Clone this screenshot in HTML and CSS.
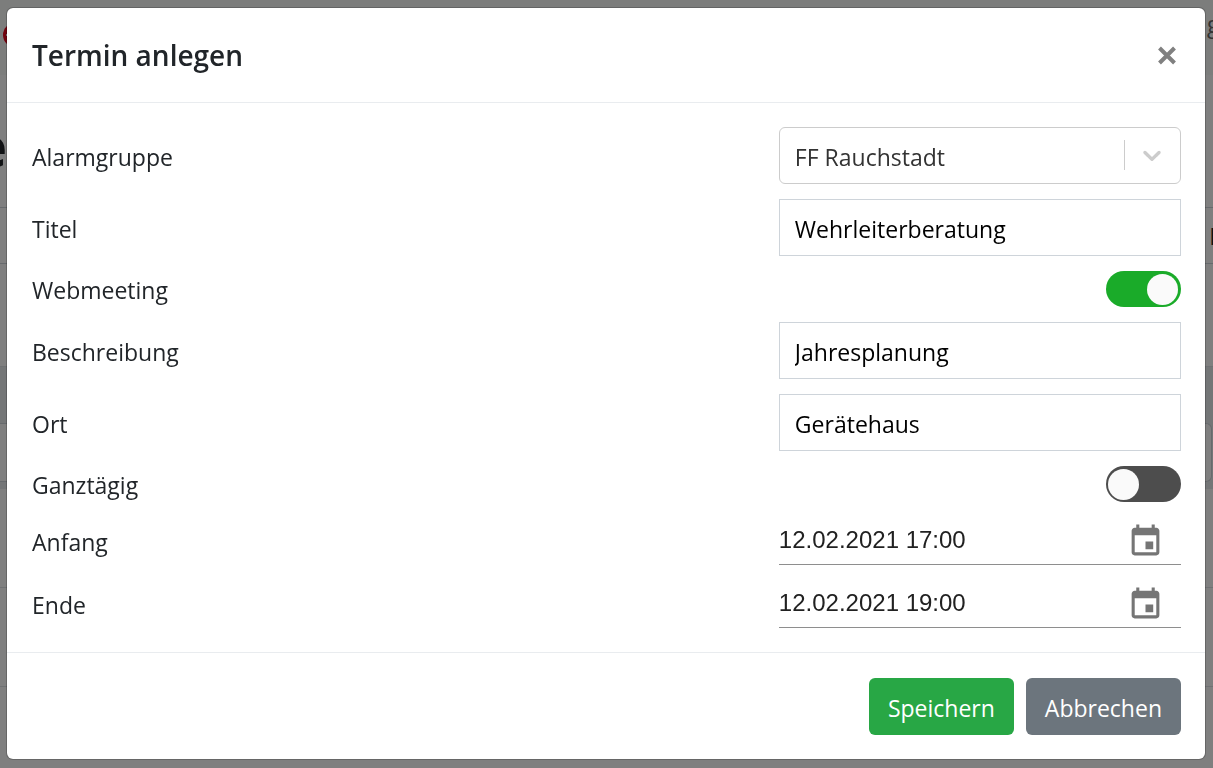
FILE: index.html
```html
<!DOCTYPE html>
<html lang="de">
  <head>
    <meta charset="UTF-8" />
    <meta name="viewport" content="width=device-width, initial-scale=1.0" />
    <title>Termin anlegen</title>
    <link rel="stylesheet" href="styles.css">
  </head>
  <body>
    <div class="page" aria-hidden="true">
      <div class="page-nav">
        <svg class="page-logo" viewBox="0 0 24 24">
          <circle cx="12" cy="12" r="12" fill="#e3061c" />
          <path d="M3 11h8v2H3z" fill="#fff" />
        </svg>
        <span class="page-user">g</span>
      </div>
      <div class="page-title">e</div>
      <div class="page-filter">D</div>
      <div class="page-space"></div>
      <div class="page-head"></div>
      <div class="page-search"></div>
      <div class="page-row"></div>
      <div class="page-row"></div>
    </div>

    <div class="backdrop">
      <form class="modal" role="dialog" aria-labelledby="modal-title">
        <div class="modal-header">
          <h1 class="modal-title" id="modal-title">Termin anlegen</h1>
          <button type="button" class="close" aria-label="Schließen">
            <svg width="20" height="20" viewBox="0 0 20 20">
              <path d="M2.5 3l15 15M17.5 3l-15 15" />
            </svg>
          </button>
        </div>

        <div class="modal-body">
          <div class="form-row">
            <label for="group">Alarmgruppe</label>
            <div class="select">
              <select id="group">
                <option>FF Rauchstadt</option>
              </select>
              <span class="select-indicator">
                <svg width="30" height="30" viewBox="0 0 20 20">
                  <path d="M4.516 7.548c0.436-0.446 1.043-0.481 1.576 0l3.908 3.747 3.908-3.747c0.533-0.481 1.141-0.446 1.574 0 0.436 0.445 0.408 1.197 0 1.615-0.406 0.418-4.695 4.502-4.695 4.502-0.217 0.223-0.502 0.335-0.787 0.335s-0.57-0.112-0.789-0.335c0 0-4.287-4.084-4.695-4.502s-0.436-1.17 0-1.615z" />
                </svg>
              </span>
            </div>
          </div>

          <div class="form-row">
            <label for="title">Titel</label>
            <input type="text" class="text-input" id="title" value="Wehrleiterberatung" />
          </div>

          <div class="form-row">
            <label for="webmeeting">Webmeeting</label>
            <input type="checkbox" class="switch" id="webmeeting" checked />
          </div>

          <div class="form-row">
            <label for="description">Beschreibung</label>
            <input type="text" class="text-input" id="description" value="Jahresplanung" />
          </div>

          <div class="form-row">
            <label for="location">Ort</label>
            <input type="text" class="text-input" id="location" value="Gerätehaus" />
          </div>

          <div class="form-row">
            <label for="allday">Ganztägig</label>
            <input type="checkbox" class="switch" id="allday" />
          </div>

          <div class="form-row">
            <label for="start">Anfang</label>
            <div class="date-input">
              <input type="text" id="start" value="12.02.2021 17:00" />
              <button type="button" aria-label="Anfang auswählen">
                <svg width="37" height="37" viewBox="0 0 24 24">
                  <path d="M17 12h-5v5h5v-5zM16 1v2H8V1H6v2H5c-1.11 0-1.99.9-1.99 2L3 19c0 1.1.89 2 2 2h14c1.1 0 2-.9 2-2V5c0-1.1-.9-2-2-2h-1V1h-2zm3 18H5V8h14v11z" />
                </svg>
              </button>
            </div>
          </div>

          <div class="form-row">
            <label for="end">Ende</label>
            <div class="date-input">
              <input type="text" id="end" value="12.02.2021 19:00" />
              <button type="button" aria-label="Ende auswählen">
                <svg width="37" height="37" viewBox="0 0 24 24">
                  <path d="M17 12h-5v5h5v-5zM16 1v2H8V1H6v2H5c-1.11 0-1.99.9-1.99 2L3 19c0 1.1.89 2 2 2h14c1.1 0 2-.9 2-2V5c0-1.1-.9-2-2-2h-1V1h-2zm3 18H5V8h14v11z" />
                </svg>
              </button>
            </div>
          </div>
        </div>

        <div class="modal-footer">
          <button type="submit" class="btn btn-success">Speichern</button>
          <button type="button" class="btn btn-secondary">Abbrechen</button>
        </div>
      </form>
    </div>
  </body>
</html>
```

FILE: styles.css
```css
* {
  box-sizing: border-box;
}
body {
  margin: 0;
  font-family: 'Segoe UI', 'Open Sans', sans-serif;
  font-size: 23px;
  line-height: 36px;
  color: #212529;
  background-color: #fff;
}
button,
input,
select {
  font: inherit;
}

/* page behind the dialog */
.page {
  height: 100vh;
  overflow: hidden;
}
.page-nav {
  display: flex;
  justify-content: space-between;
  height: 75px;
  padding: 6px 0 0 3px;
  background-color: #f8faf9;
}
.page-logo {
  width: 24px;
  height: 24px;
  margin-top: 17px;
}
.page-user {
  width: 6px;
  color: #666;
}
.page-title {
  display: flex;
  justify-content: flex-end;
  width: 7px;
  height: 132px;
  padding-top: 52px;
  font-size: 56px;
  font-weight: 700;
}
.page-filter {
  display: flex;
  justify-content: flex-end;
  height: 57px;
  padding: 10px 0;
  margin-right: -14px;
  border: 1px solid #ced4da;
  border-left: 0;
}
.page-space {
  height: 102px;
}
.page-head {
  height: 57px;
  border-top: 1px solid #dee2e6;
  background-color: #e9ecef;
}
.page-search {
  height: 66px;
  padding-bottom: 8px;
  padding-right: 1px;
  background-color: #e9ecef;
}
.page-search::before {
  content: '';
  display: block;
  height: 57px;
  border: 1px solid #ced4da;
  border-left: 0;
  border-radius: 0 6px 6px 0;
  background-color: #fff;
}
.page-row {
  height: 99px;
  border-bottom: 1px solid #dee2e6;
}

.backdrop {
  position: fixed;
  inset: 0;
  padding: 7px 7px 0 6px;
  overflow: auto;
  background-color: rgba(0, 0, 0, 0.5);
}
.modal {
  border: 1px solid rgba(0, 0, 0, 0.2);
  border-radius: 7px;
  background-color: #fff;
  background-clip: padding-box;
}
.modal-header {
  display: flex;
  align-items: center;
  justify-content: space-between;
  padding: 24px 24px 24px 25px;
  border-bottom: 1px solid #e9ecef;
}
.modal-title {
  margin: 0;
  font-size: 28px;
  font-weight: 600;
  line-height: 46px;
}
.close {
  display: flex;
  padding: 4px;
  border: 0;
  background: none;
  cursor: pointer;
}
.close path {
  stroke: #808080;
  stroke-width: 4;
}

.modal-body {
  display: flex;
  flex-direction: column;
  gap: 15px;
  padding: 24px 24px 24px 25px;
}
.form-row {
  display: grid;
  grid-template-columns: 1fr 35%;
  align-items: center;
}
.form-row label {
  padding-top: 2px;
  line-height: 34px;
}
.text-input,
.select select {
  width: 100%;
  height: 57px;
  padding: 2px 16px 0 15px;
  border: 1px solid #ced4da;
  color: #000;
  background-color: #fff;
}
.select {
  position: relative;
}
.select select {
  display: block;
  appearance: none;
  border-color: #ccc;
  border-radius: 6px;
  color: #333;
}
.select-indicator {
  position: absolute;
  top: 13px;
  right: 0;
  display: flex;
  padding: 0 14px 0 12px;
  border-left: 1px solid #ccc;
  pointer-events: none;
}
.select-indicator svg {
  fill: #ccc;
}

.switch {
  appearance: none;
  display: flex;
  align-items: center;
  justify-self: end;
  width: 75px;
  height: 36px;
  margin: 0;
  padding: 0 3px 0 2px;
  border-radius: 18px;
  background-color: #4d4d4d;
  cursor: pointer;
}
.switch::before {
  content: '';
  width: 31px;
  height: 31px;
  border-radius: 50%;
  background-color: #fafafa;
}
.switch:checked {
  justify-content: flex-end;
  background-color: #1aab29;
}

.date-input {
  display: flex;
  align-items: center;
  height: 48px;
  border-bottom: 1px solid #8e8e8e;
}
.date-input input {
  flex: 1;
  min-width: 0;
  padding: 0 0 2px;
  border: 0;
  font-family: Arial, 'Liberation Sans', sans-serif;
  font-size: 24px;
  color: #212121;
  background: none;
}
.date-input button {
  display: flex;
  padding: 1px 17px 0;
  border: 0;
  background: none;
  cursor: pointer;
}
.date-input svg {
  fill: #757575;
}

.modal-footer {
  display: flex;
  justify-content: flex-end;
  gap: 12px;
  padding: 25px 24px 24px;
  border-top: 1px solid #e9ecef;
}
.btn {
  height: 57px;
  padding: 2px 19px 0;
  border: 0;
  border-radius: 6px;
  color: #fff;
  cursor: pointer;
}
.btn-success {
  background-color: #28a745;
}
.btn-secondary {
  background-color: #6c757d;
}
```
